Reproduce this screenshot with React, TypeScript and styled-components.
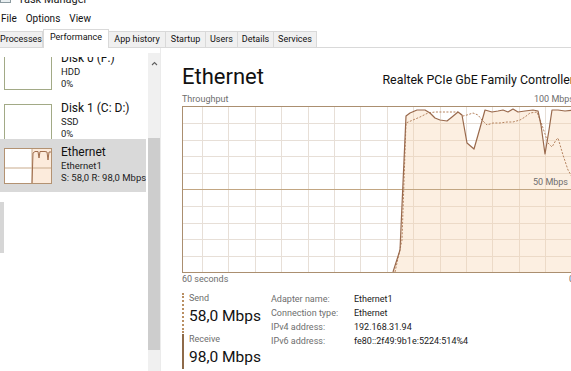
import React from "react";
import styled, { createGlobalStyle } from "styled-components";

const GlobalStyle = createGlobalStyle`
  html, body { margin: 0; padding: 0; background: #ffffff; }
  body { font-family: Roboto, "Noto Sans", "Liberation Sans", sans-serif; color: #000; }
  * { box-sizing: border-box; }
`;

const Window = styled.div`
  width: 571px;
  height: 371px;
  overflow: hidden;
  display: flex;
  flex-direction: column;
  background: #ffffff;
`;

const TitleBar = styled.div`
  height: 9px;
  flex: none;
  display: flex;
  align-items: flex-end;
  gap: 6px;
  padding-bottom: 3px;
  overflow: hidden;
`;

const TitleText = styled.span`
  font-size: 11px;
  line-height: 12px;
  color: #1a1a1a;
  white-space: nowrap;
`;

const MenuBar = styled.div`
  height: 20px;
  flex: none;
  display: flex;
  align-items: center;
  gap: 9px;
  padding-left: 1px;
  font-size: 10px;
  line-height: 12px;
  color: #111;
`;

const MenuItem = styled.span``;

const TabStrip = styled.div`
  height: 19px;
  flex: none;
  display: flex;
  align-items: flex-end;
  border-bottom: 1px solid #d9d9d9;
`;

const Tab = styled.div<{ $w: number; $active?: boolean }>`
  width: ${(p) => p.$w}px;
  height: ${(p) => (p.$active ? 19 : 16)}px;
  margin-bottom: ${(p) => (p.$active ? -1 : 0)}px;
  flex: none;
  display: flex;
  justify-content: center;
  align-items: flex-start;
  font-size: 9px;
  line-height: 15px;
  color: #111;
  white-space: nowrap;
  background: ${(p) => (p.$active ? "#ffffff" : "#f0f0f0")};
  border-top: 1px solid #d9d9d9;
  border-right: 1px solid #d9d9d9;
  border-left: ${(p) => (p.$active ? "1px solid #d9d9d9" : "none")};
`;

const Body = styled.div`
  flex: 1;
  min-height: 0;
  display: flex;
`;

const Sidebar = styled.div`
  width: 148px;
  flex: none;
  margin-top: 9px;
  overflow: hidden;
  display: flex;
  flex-direction: column;
`;

const SideItem = styled.div<{ $h: number; $selected?: boolean; $first?: boolean }>`
  height: ${(p) => p.$h}px;
  flex: none;
  margin-top: ${(p) => (p.$first ? -12 : 0)}px;
  margin-right: 2px;
  padding: 6px 0 0 4px;
  display: flex;
  align-items: flex-start;
  gap: 9px;
  overflow: hidden;
  background: ${(p) => (p.$selected ? "#d9d9d9" : "transparent")};
`;

const Thumb = styled.div<{ $color: string }>`
  width: 48px;
  height: 36px;
  margin-top: 3px;
  flex: none;
  border: 1px solid ${(p) => p.$color};
  background: #ffffff;
  display: flex;
`;

const ItemText = styled.div`
  display: flex;
  flex-direction: column;
  white-space: nowrap;
`;

const ItemTitle = styled.span`
  font-size: 12px;
  line-height: 15px;
  color: #111;
`;

const ItemSub = styled.span`
  font-size: 9.5px;
  line-height: 12px;
  color: #222;
`;

const EdgeMark = styled.div`
  width: 4px;
  height: 51px;
  margin-top: 10px;
  flex: none;
  background: #d6d6d6;
`;

const Scrollbar = styled.div`
  width: 12px;
  flex: none;
  margin-top: 5px;
  background: #f0f0f0;
  display: flex;
  flex-direction: column;
`;

const ScrollArrow = styled.div`
  height: 20px;
  flex: none;
  display: flex;
  align-items: center;
  justify-content: center;
`;

const ScrollThumb = styled.div`
  height: 212px;
  margin-top: 65px;
  flex: none;
  background: #cdcdcd;
`;

const Main = styled.div`
  flex: 1;
  min-width: 0;
  overflow: hidden;
  border-left: 1px solid #ebebeb;
  padding: 15px 0 0 21px;
`;

const Content = styled.div`
  width: 392px;
  display: flex;
  flex-direction: column;
`;

const Header = styled.div`
  display: flex;
  align-items: baseline;
  justify-content: space-between;
  white-space: nowrap;
`;

const PageTitle = styled.span`
  font-size: 22px;
  line-height: 27px;
  color: #111;
`;

const DeviceName = styled.span`
  font-size: 12.4px;
  color: #111;
`;

const LabelRow = styled.div<{ $mt: number }>`
  display: flex;
  justify-content: space-between;
  margin-top: ${(p) => p.$mt}px;
  font-size: 9px;
  line-height: 12px;
  color: #6e6e6e;
  white-space: nowrap;
`;

const Graph = styled.div`
  position: relative;
  height: 167px;
  margin-top: 1px;
  border: 1px solid #ab8f70;
  display: flex;
`;

const GraphLabel = styled.span`
  position: absolute;
  right: 5px;
  top: 70px;
  font-size: 9px;
  line-height: 11px;
  color: #6e6e6e;
`;

const StatsRow = styled.div`
  display: flex;
  align-items: flex-start;
  margin-top: 8px;
`;

const StatsCol = styled.div`
  width: 89px;
  flex: none;
  display: flex;
  flex-direction: column;
`;

const StatBlock = styled.div<{ $dotted?: boolean }>`
  border-left: 2px ${(p) => (p.$dotted ? "dotted #b98f63" : "solid #8e6a49")};
  padding: 0 0 ${(p) => (p.$dotted ? 7 : 2)}px 5px;
  margin-top: ${(p) => (p.$dotted ? 0 : 1)}px;
  display: flex;
  flex-direction: column;
  gap: 2px;
`;

const StatLabel = styled.span`
  font-size: 9px;
  line-height: 11px;
  color: #6e6e6e;
`;

const StatValue = styled.span`
  font-size: 15.5px;
  line-height: 20px;
  color: #111;
  white-space: nowrap;
`;

const PropGrid = styled.div`
  margin-top: -1px;
  display: grid;
  grid-template-columns: 83px auto;
  align-content: start;
  font-size: 9px;
  line-height: 14px;
  white-space: nowrap;
`;

const PropLabel = styled.span`
  color: #6e6e6e;
`;

const PropValue = styled.span`
  color: #1a1a1a;
`;

const solid: [number, number][] = [
  [393, 272], [400, 250], [406, 116], [410, 113], [417, 110], [425, 110], [430, 113],
  [435, 118], [440, 120], [447, 121], [452, 117], [458, 112], [462, 115], [467, 143],
  [474, 149], [480, 128], [485, 110], [492, 112], [498, 111], [503, 110], [508, 112],
  [513, 109], [518, 112], [525, 111], [533, 110], [538, 111], [541, 125], [545, 154],
  [549, 130], [552, 110], [558, 110], [565, 111], [575, 110],
];

const dashed: [number, number][] = [
  [395, 272], [402, 240], [406, 123], [413, 120], [420, 117], [428, 113], [435, 112],
  [445, 112], [458, 112], [463, 116], [467, 115], [473, 113], [478, 115], [482, 120],
  [487, 125], [493, 123], [500, 123], [507, 122], [513, 122], [520, 120], [525, 117],
  [530, 113], [537, 112], [542, 125], [548, 143], [552, 147], [556, 140], [558, 138],
  [563, 155], [568, 170], [575, 182],
];

const toPath = (pts: [number, number][]) =>
  pts.map((p, i) => `${i === 0 ? "M" : "L"}${p[0]},${p[1]}`).join(" ");

const ThroughputChart: React.FC = () => {
  const verticals: number[] = [];
  for (let x = 202; x < 575; x += 26.4) verticals.push(Math.round(x) + 0.5);
  const horizontals: number[] = [];
  for (let k = 1; k < 10; k++) if (k !== 5) horizontals.push(Math.round(106.6 + 16.6 * k) + 0.5);
  const fill = `${toPath(solid)} L575,273 L393,273 Z`;
  return (
    <svg width="100%" height="100%" viewBox="183 107 390 165" preserveAspectRatio="none">
      {verticals.map((x) => (
        <line key={`v${x}`} x1={x} y1={107} x2={x} y2={272} stroke="#e7dfd7" strokeWidth={1} />
      ))}
      {horizontals.map((y) => (
        <line key={`h${y}`} x1={183} y1={y} x2={575} y2={y} stroke="#e7dfd7" strokeWidth={1} />
      ))}
      <path d={fill} fill="#f8d2ad" fillOpacity={0.36} />
      <line x1={183} y1={189.5} x2={575} y2={189.5} stroke="#c2a682" strokeWidth={1} />
      <path d={toPath(dashed)} fill="none" stroke="#b5835f" strokeWidth={1} strokeDasharray="2 1.5" />
      <path d={toPath(solid)} fill="none" stroke="#99694c" strokeWidth={1.2} strokeLinejoin="round" />
    </svg>
  );
};

const EthernetThumb: React.FC = () => (
  <svg width="46" height="34" viewBox="0 0 46 34">
    <rect x="27" y="0" width="19" height="34" fill="#fcebdc" />
    <line x1="0" y1="19" x2="46" y2="19" stroke="#c9ab8c" strokeWidth="1" />
    <line x1="27" y1="0" x2="27" y2="34" stroke="#c9ab8c" strokeWidth="1" />
    <path d="M27,34 L28,4 L30,2.5 L33,2.5 L34,9 L35,2.5 L40,2.5 L42,3 L43,11 L44,3 L46,3" fill="none" stroke="#a06e4e" strokeWidth="1" />
  </svg>
);

const AppIcon: React.FC = () => (
  <svg width="12" height="12" viewBox="0 0 12 12">
    <rect x="0.5" y="0.5" width="10" height="8" fill="#e8eef0" stroke="#8b9aa0" />
    <path d="M1.5,6 L3.5,4 L5,5.5 L7,2.5 L9.5,4" fill="none" stroke="#2a9d7a" strokeWidth="1" />
  </svg>
);

const Chevron: React.FC = () => (
  <svg width="7" height="5" viewBox="0 0 7 5">
    <path d="M1,4 L3.5,1.5 L6,4" fill="none" stroke="#606060" strokeWidth="1.1" />
  </svg>
);

const tabs: { label: string; w: number; active?: boolean }[] = [
  { label: "Processes", w: 43 },
  { label: "Performance", w: 66, active: true },
  { label: "App history", w: 57 },
  { label: "Startup", w: 40 },
  { label: "Users", w: 32 },
  { label: "Details", w: 36 },
  { label: "Services", w: 43 },
];

const props: [string, string][] = [
  ["Adapter name:", "Ethernet1"],
  ["Connection type:", "Ethernet"],
  ["IPv4 address:", "192.168.31.94"],
  ["IPv6 address:", "fe80::2f49:9b1e:5224:514%4"],
];

export default function App() {
  return (
    <>
      <GlobalStyle />
      <Window>
        <TitleBar>
          <AppIcon />
          <TitleText>Task Manager</TitleText>
        </TitleBar>
        <MenuBar>
          <MenuItem>File</MenuItem>
          <MenuItem>Options</MenuItem>
          <MenuItem>View</MenuItem>
        </MenuBar>
        <TabStrip>
          {tabs.map((t) => (
            <Tab key={t.label} $w={t.w} $active={t.active}>
              {t.label}
            </Tab>
          ))}
        </TabStrip>
        <Body>
          <Sidebar>
            <SideItem $h={50} $first>
              <Thumb $color="#a2aa86" />
              <ItemText>
                <ItemTitle>Disk 0 (F:)</ItemTitle>
                <ItemSub>HDD</ItemSub>
                <ItemSub>0%</ItemSub>
              </ItemText>
            </SideItem>
            <SideItem $h={44}>
              <Thumb $color="#a2aa86" />
              <ItemText>
                <ItemTitle>Disk 1 (C: D:)</ItemTitle>
                <ItemSub>SSD</ItemSub>
                <ItemSub>0%</ItemSub>
              </ItemText>
            </SideItem>
            <SideItem $h={53} $selected>
              <Thumb $color="#b39272">
                <EthernetThumb />
              </Thumb>
              <ItemText>
                <ItemTitle>Ethernet</ItemTitle>
                <ItemSub>Ethernet1</ItemSub>
                <ItemSub>S: 58,0 R: 98,0 Mbps</ItemSub>
              </ItemText>
            </SideItem>
            <EdgeMark />
          </Sidebar>
          <Scrollbar>
            <ScrollArrow>
              <Chevron />
            </ScrollArrow>
            <ScrollThumb />
          </Scrollbar>
          <Main>
            <Content>
              <Header>
                <PageTitle>Ethernet</PageTitle>
                <DeviceName>Realtek PCIe GbE Family Controller</DeviceName>
              </Header>
              <LabelRow $mt={3}>
                <span>Throughput</span>
                <span>100 Mbps</span>
              </LabelRow>
              <Graph>
                <ThroughputChart />
                <GraphLabel>50 Mbps</GraphLabel>
              </Graph>
              <LabelRow $mt={0}>
                <span>60 seconds</span>
                <span>0</span>
              </LabelRow>
              <StatsRow>
                <StatsCol>
                  <StatBlock $dotted>
                    <StatLabel>Send</StatLabel>
                    <StatValue>58,0 Mbps</StatValue>
                  </StatBlock>
                  <StatBlock>
                    <StatLabel>Receive</StatLabel>
                    <StatValue>98,0 Mbps</StatValue>
                  </StatBlock>
                </StatsCol>
                <PropGrid>
                  {props.map(([k, v]) => (
                    <React.Fragment key={k}>
                      <PropLabel>{k}</PropLabel>
                      <PropValue>{v}</PropValue>
                    </React.Fragment>
                  ))}
                </PropGrid>
              </StatsRow>
            </Content>
          </Main>
        </Body>
      </Window>
    </>
  );
}
